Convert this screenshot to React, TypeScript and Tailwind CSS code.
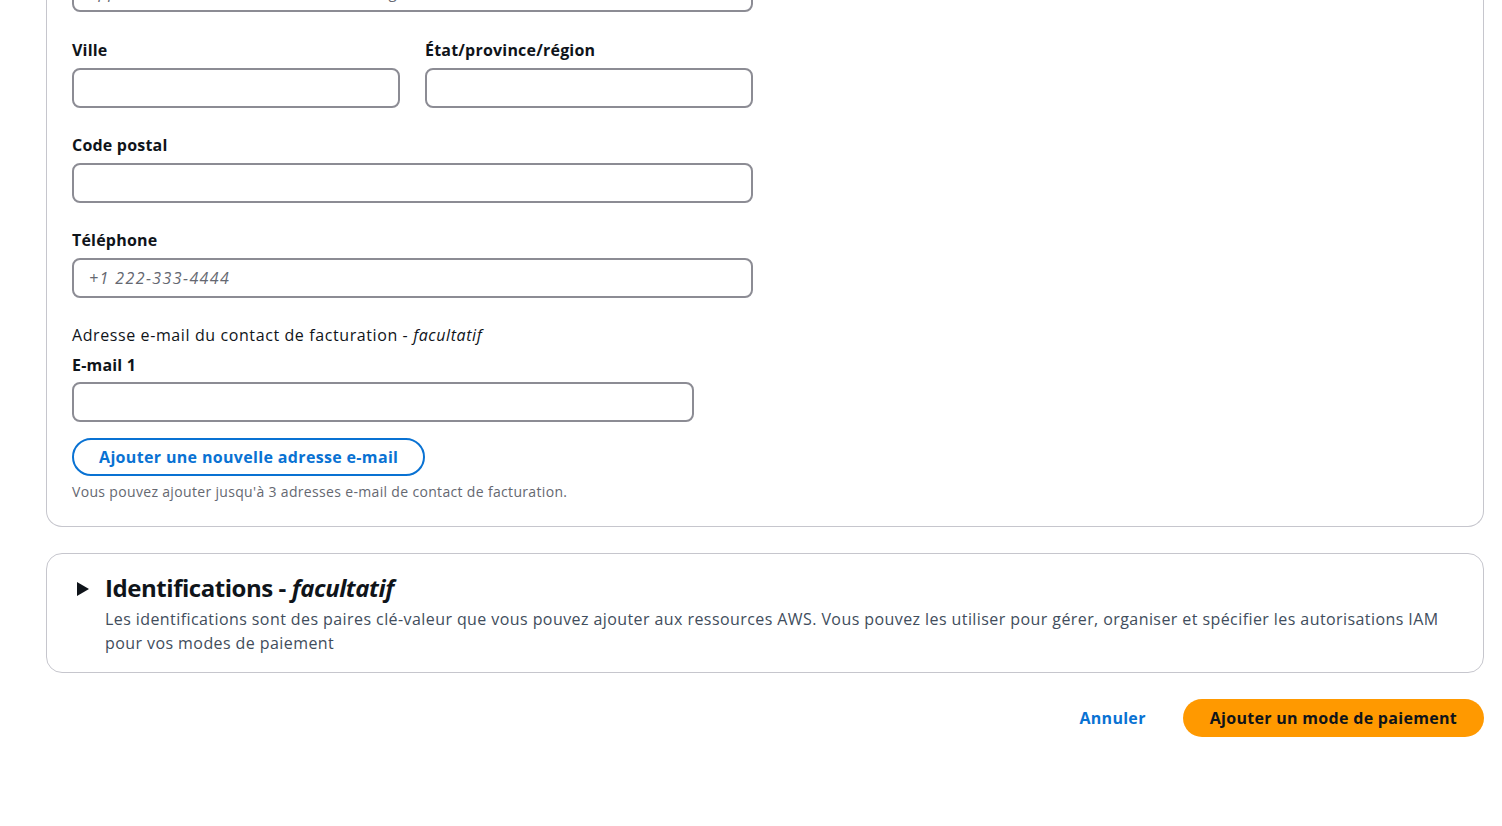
import React from 'react';

const font = { fontFamily: '"Open Sans", "Noto Sans", sans-serif' };

const Label = ({ children }: { children: React.ReactNode }) => (
  <div className="text-[16px] leading-[22px] font-bold tracking-[0.2px] text-[#0f141a] mb-[7px]">{children}</div>
);

const Input = ({ placeholder, className = '' }: { placeholder?: string; className?: string }) => (
  <input
    placeholder={placeholder}
    className={`block h-[40px] w-full rounded-[8px] border-2 border-[#8c8c94] bg-white px-[15px] text-[16px] text-[#0f141a] placeholder:text-[#656871] outline-none ${className}`}
  />
);

export default function App() {
  return (
    <div className="min-h-screen bg-white overflow-hidden" style={font}>
      <div className="pl-[46px] pr-[18px]">
        {/* Adresse de facturation */}
        <div className="-mt-[28px] rounded-b-[16px] border border-t-0 border-[#c6c6cd] px-[25px] pb-[24px]">
          <Input
            placeholder="Appartement, suite, unité, bâtiment, étage, etc."
            className="max-w-[681px] tracking-[0.5px] placeholder:italic"
          />

          <div className="mt-[27px] grid w-[681px] grid-cols-2 gap-x-[25px]">
            <div>
              <Label>Ville</Label>
              <Input />
            </div>
            <div>
              <Label>État/province/région</Label>
              <Input />
            </div>
          </div>

          <div className="mt-[26px] w-[681px]">
            <Label>Code postal</Label>
            <Input />
          </div>

          <div className="mt-[26px] w-[681px]">
            <Label>Téléphone</Label>
            <Input placeholder="+1 222-333-4444" className="tracking-[1.4px] placeholder:italic" />
          </div>

          <div className="mt-[26px] text-[16px] leading-[22px] tracking-[0.6px] text-[#0f141a]">
            Adresse e-mail du contact de facturation - <i>facultatif</i>
          </div>
          <div className="mt-[8px] w-[622px]">
            <div className="text-[16px] leading-[22px] font-bold tracking-[0.2px] text-[#0f141a] mb-[6px]">E-mail 1</div>
            <Input />
          </div>

          <button className="mt-[16px] h-[38px] rounded-full border-2 border-[#0972d3] px-[25px] text-[16px] font-bold leading-[22px] tracking-[0.34px] text-[#0972d3]">
            Ajouter une nouvelle adresse e-mail
          </button>
          <div className="mt-[6px] text-[14px] leading-[20px] tracking-[0.33px] text-[#656871]">
            Vous pouvez ajouter jusqu'à 3 adresses e-mail de contact de facturation.
          </div>
        </div>

        {/* Identifications */}
        <div className="mt-[26px] rounded-[16px] border border-[#c6c6cd] pl-[29px] pr-[25px] pt-[19px] pb-[17px]">
          <div className="flex items-start gap-[16px]">
            <svg width="13" height="14" viewBox="0 0 13 14" className="mt-[9px] shrink-0">
              <path d="M1 0 L13 7 L1 14 Z" fill="#0f141a" />
            </svg>
            <div>
              <h2 className="text-[24px] leading-[30px] font-bold tracking-[-0.45px] text-[#0f141a]">
                Identifications - <i>facultatif</i>
              </h2>
              <p className="mt-[4px] text-[16px] leading-[24px] tracking-[0.42px] text-[#414d5c]">
                Les identifications sont des paires clé-valeur que vous pouvez ajouter aux ressources AWS. Vous pouvez les utiliser pour gérer, organiser et spécifier les autorisations IAM pour vos modes de paiement
              </p>
            </div>
          </div>
        </div>

        {/* Actions */}
        <div className="mt-[26px] flex items-center justify-end gap-[37px]">
          <button className="text-[16px] font-bold leading-[22px] tracking-[0.3px] text-[#0972d3]">Annuler</button>
          <button className="h-[38px] rounded-full bg-[#ff9900] px-[27px] text-[16px] font-bold leading-[22px] tracking-[0.3px] text-[#0f141a]">
            Ajouter un mode de paiement
          </button>
        </div>
      </div>
    </div>
  );
}
